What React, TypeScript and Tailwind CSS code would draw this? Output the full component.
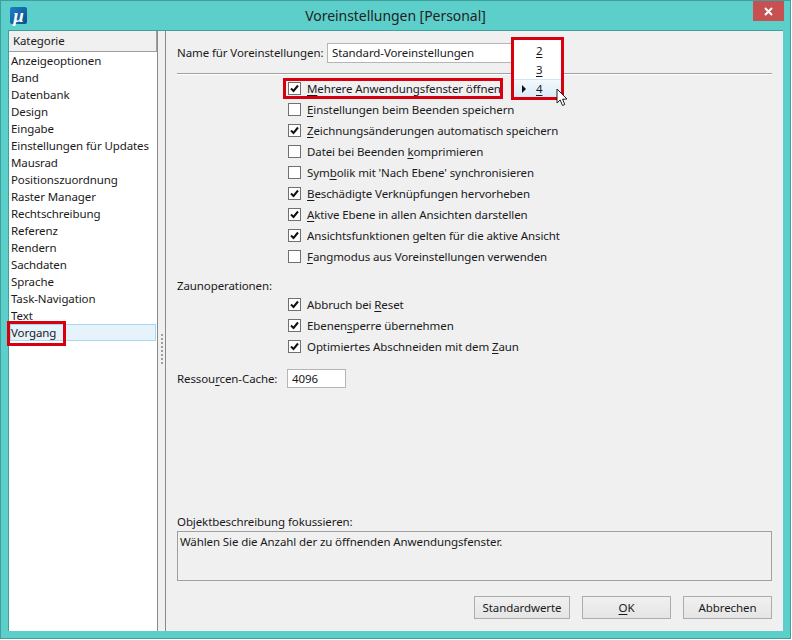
const categories = [
  'Anzeigeoptionen', 'Band', 'Datenbank', 'Design', 'Eingabe', 'Einstellungen für Updates', 'Mausrad',
  'Positionszuordnung', 'Raster Manager', 'Rechtschreibung', 'Referenz', 'Rendern', 'Sachdaten',
  'Sprache', 'Task-Navigation', 'Text',
];

// [label, index of the underlined letter, checked]
const mainOptions: [string, number, boolean][] = [
  ['Mehrere Anwendungsfenster öffnen', 0, true],
  ['Einstellungen beim Beenden speichern', 0, false],
  ['Zeichnungsänderungen automatisch speichern', 0, true],
  ['Datei bei Beenden komprimieren', 18, false],
  ["Symbolik mit 'Nach Ebene' synchronisieren", 3, false],
  ['Beschädigte Verknüpfungen hervorheben', 0, true],
  ['Aktive Ebene in allen Ansichten darstellen', 0, true],
  ['Ansichtsfunktionen gelten für die aktive Ansicht', -1, true],
  ['Fangmodus aus Voreinstellungen verwenden', 0, false],
];

const fenceOptions: [string, number, boolean][] = [
  ['Abbruch bei Reset', 12, true],
  ['Ebenensperre übernehmen', 6, true],
  ['Optimiertes Abschneiden mit dem Zaun', 32, true],
];

function Key({ text, at }: { text: string; at: number }) {
  if (at < 0) return <>{text}</>;
  return (
    <>
      {text.slice(0, at)}
      <span className="underline underline-offset-2">{text[at]}</span>
      {text.slice(at + 1)}
    </>
  );
}

function CheckRow({ label, at, checked }: { label: string; at: number; checked: boolean }) {
  return (
    <div className="flex h-[21px] items-center pl-[111px]">
      <span className="flex h-[13px] w-[13px] items-center justify-center border border-[#707070] bg-white">
        {checked && (
          <svg width="9" height="9" viewBox="0 0 9 9">
            <path d="M1 4.5 L3.5 7 L8 1.5" fill="none" stroke="#111" strokeWidth="2" />
          </svg>
        )}
      </span>
      <span className="ml-[6px] whitespace-nowrap">
        <Key text={label} at={at} />
      </span>
    </div>
  );
}

function DialogButton({ width, children }: { width: string; children: React.ReactNode }) {
  return (
    <div className={`flex h-[23px] items-center justify-center border border-[#acacac] bg-gradient-to-b from-[#f0f0f0] to-[#e5e5e5] ${width}`}>
      {children}
    </div>
  );
}

export default function App() {
  return (
    <div
      className="relative flex h-[639px] w-[791px] flex-col overflow-hidden border border-[#3f9f9c] bg-[#5ccfcb] text-[11.5px] leading-[16px] tracking-[-0.1px] text-[#1a1a1a]"
      style={{ fontFamily: '"Noto Sans", "Open Sans", sans-serif' }}
    >
      <div className="relative flex h-[29px] shrink-0 items-center justify-center">
        <div
          className="absolute left-[9px] top-[6px] flex h-[17px] w-[17px] items-center justify-center rounded-[2px] bg-gradient-to-br from-[#1f7fc4] to-[#0c4f8c] text-[19px] font-bold italic leading-[17px] text-white"
          style={{ fontFamily: '"Liberation Serif", serif' }}
        >
          μ
        </div>
        <span className="text-[14px] tracking-[-0.05px] text-[#222]">Voreinstellungen [Personal]</span>
        <div className="absolute right-[6px] top-0 flex h-[20px] w-[31px] items-center justify-center bg-[#c75050]">
          <svg width="9" height="9" viewBox="0 0 9 9">
            <path d="M1 1 L8 8 M8 1 L1 8" stroke="#fff" strokeWidth="2" />
          </svg>
        </div>
      </div>

      <div className="ml-[7px] flex h-[601px] w-[775px] border-l border-t border-[#3f9f9c] bg-[#f0f0f0]">
        <aside className="flex w-[149px] shrink-0 flex-col border-r border-[#8a8a8a] bg-white">
          <div className="flex h-[21px] items-center border-b border-r border-[#a0a0a0] bg-[#f0f0f0] pl-[4px]">Kategorie</div>
          <ul>
            {categories.map((name) => (
              <li key={name} className="flex h-[17px] items-center pl-[2px]">{name}</li>
            ))}
            <li className="relative ml-[1px] mr-[1px] flex h-[17px] items-center border border-[#a9d9f1] bg-[#e6f3fb]">
              Vorgang
              <span className="absolute left-[-4px] top-[-4px] h-[25px] w-[59px] border-[3px] border-[#d8000f]" />
            </li>
          </ul>
        </aside>

        <div className="relative flex w-[8px] shrink-0 items-center justify-center border-r border-[#8a8a8a]">
          <div className="mt-[36px] h-[30px] w-[2px] bg-[repeating-linear-gradient(to_bottom,#a0a0a0_0_2px,transparent_2px_4px)]" />
        </div>

        <main className="relative flex min-w-0 flex-1 flex-col pl-[11px] pr-[11px]">
          <div className="flex h-[42px] shrink-0 items-center pt-[1px]">
            <span className="w-[150px] whitespace-nowrap">Name für Voreinstellungen:</span>
            <div className="flex h-[20px] w-[190px] items-center border border-[#b5b5b5] bg-white pl-[4px]">Standard-Voreinstellungen</div>
          </div>
          <div className="h-[2px] shrink-0 border-t border-[#a0a0a0] bg-white" />

          <div className="mt-[3px]">
            {mainOptions.map(([label, at, checked]) => (
              <CheckRow key={label} label={label} at={at} checked={checked} />
            ))}
          </div>

          <div className="mt-[11px] h-[16px]">Zaunoperationen:</div>
          <div>
            {fenceOptions.map(([label, at, checked]) => (
              <CheckRow key={label} label={label} at={at} checked={checked} />
            ))}
          </div>

          <div className="mt-[12px] flex items-center">
            <span className="w-[110px] whitespace-nowrap"><Key text="Ressourcen-Cache:" at={6} /></span>
            <div className="flex h-[19px] w-[59px] items-center border border-[#b5b5b5] bg-white pl-[4px]">4096</div>
          </div>

          <div className="mt-auto">Objektbeschreibung fokussieren:</div>
          <div className="mt-[1px] h-[50px] border border-[#a0a0a0] pl-[2px] pt-[2px]">Wählen Sie die Anzahl der zu öffnenden Anwendungsfenster.</div>

          <div className="mb-[12px] mt-[15px] flex justify-end gap-[12px]">
            <DialogButton width="w-[96px]">Standardwerte</DialogButton>
            <DialogButton width="w-[89px]"><Key text="OK" at={0} /></DialogButton>
            <DialogButton width="w-[89px]">Abbrechen</DialogButton>
          </div>
        </main>
      </div>

      {/* annotation drawn over the Voreinstellungen dropdown */}
      <div className="absolute left-[510px] top-[36px] flex h-[63px] w-[53px] flex-col border-[3px] border-[#d8000f] bg-white pt-[2px]">
        <div className="flex h-[19px] items-center pl-[22px] underline underline-offset-2">2</div>
        <div className="flex h-[19px] items-center pl-[22px] underline underline-offset-2">3</div>
        <div className="relative flex h-[18px] items-center border-t border-[#cfe6f5] bg-gradient-to-b from-[#f2f9fd] to-[#d8ecf8] pl-[22px] underline underline-offset-2">
          4
          <span className="absolute left-[8px] top-[5px] h-0 w-0 border-y-[4px] border-l-[4px] border-y-transparent border-l-[#111]" />
        </div>
      </div>

      {/* red frame round the first option */}
      <div className="absolute left-[282px] top-[77px] h-[21px] w-[220px] border-[3px] border-[#d8000f]" />

      {/* mouse pointer */}
      <svg className="absolute left-[555px] top-[87px]" width="12" height="19" viewBox="0 0 12 19">
        <path d="M1 1 L1 15 L4.2 12 L6.5 17.5 L8.8 16.5 L6.6 11.2 L11 11 Z" fill="#fff" stroke="#222" strokeWidth="1" />
      </svg>
    </div>
  );
}
